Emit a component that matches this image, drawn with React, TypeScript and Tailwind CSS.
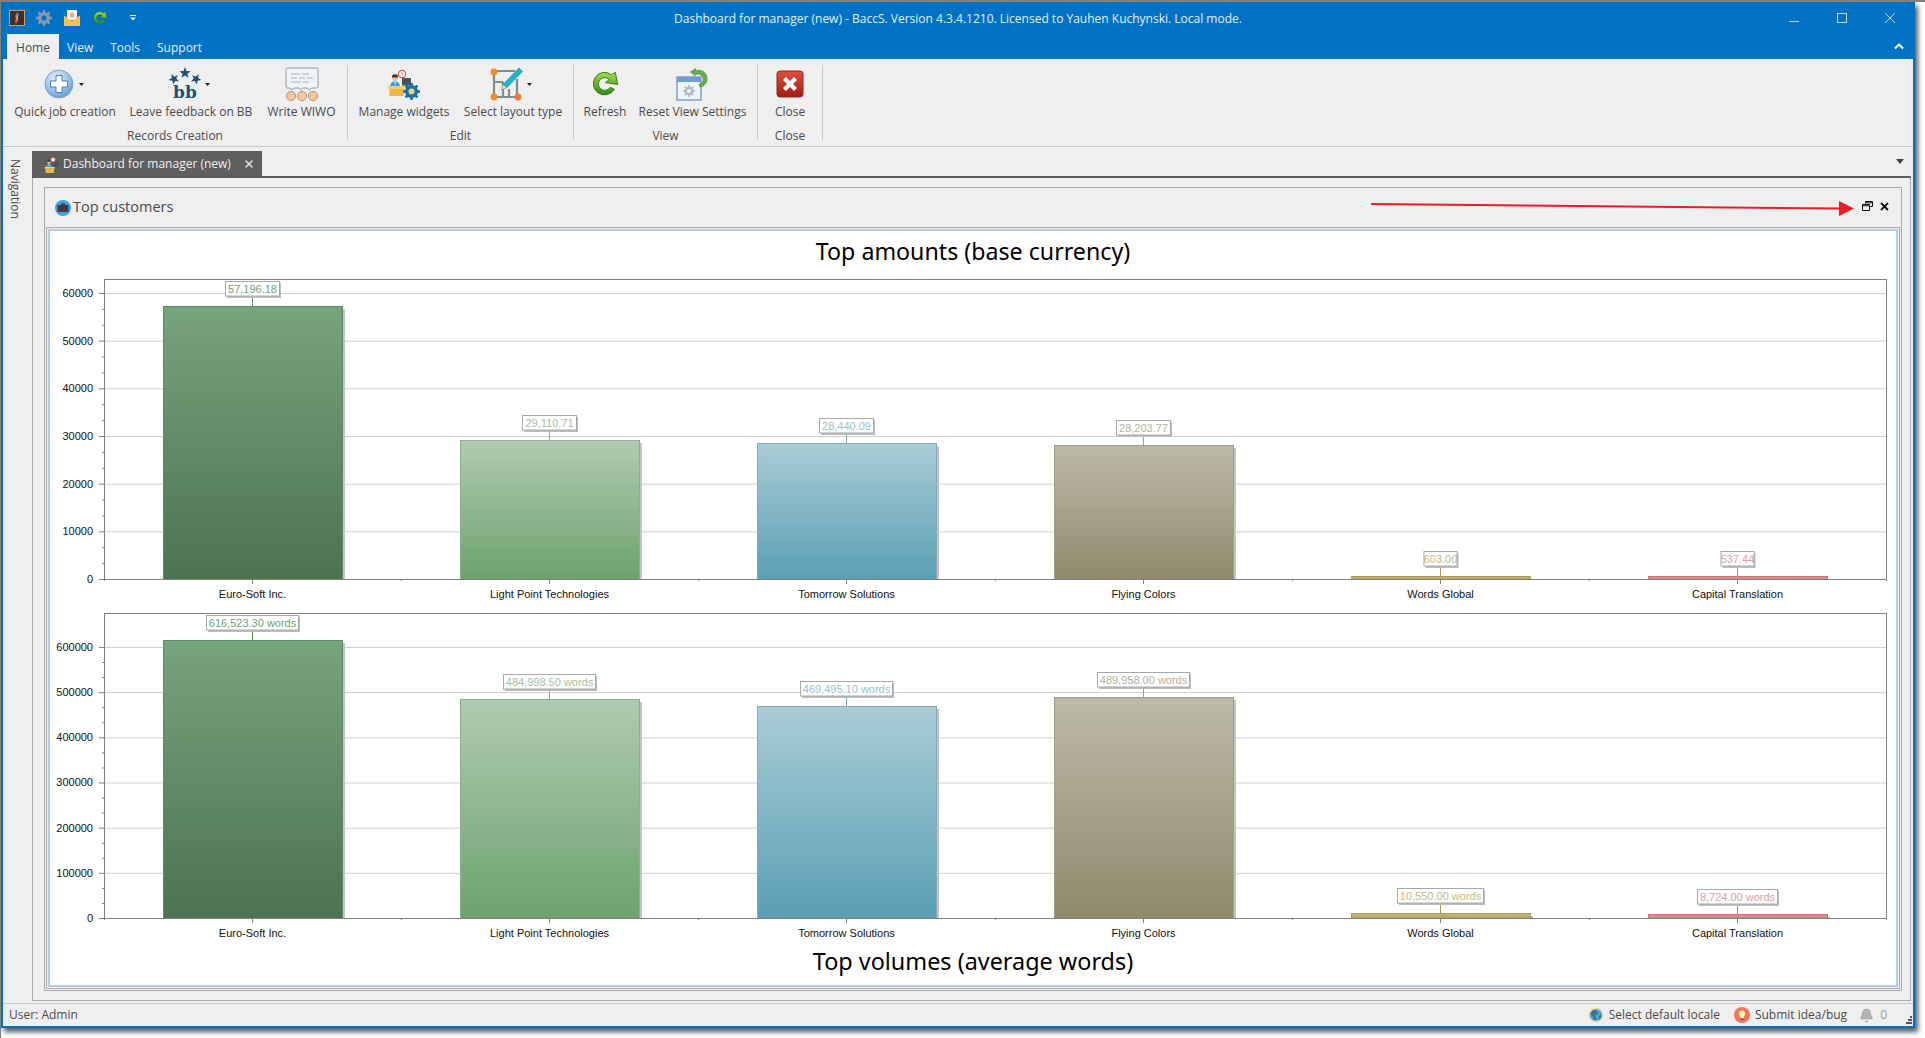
import React from 'react';
import { Bell, X } from 'lucide-react';

type Bar = { name: string; value: number; label: string; boxW: number };

const series = [
  { top: '#76a47c', bottom: '#4d7250', edge: '#5d8a64', text: '#6f9f77' },
  { top: '#b0cbb0', bottom: '#6ca26e', edge: '#8fae90', text: '#a3c09f' },
  { top: '#aaccd6', bottom: '#5a9fb4', edge: '#84a9b4', text: '#9bbfcb' },
  { top: '#bdb9a8', bottom: '#8f8a6c', edge: '#a09c88', text: '#b5b19c' },
  { top: '#c6b878', bottom: '#b3a35f', edge: '#a89a5c', text: '#c5b97f' },
  { top: '#e49a9a', bottom: '#d07a7c', edge: '#c47578', text: '#d9a0a5' },
];

const amounts: Bar[] = [
  { name: 'Euro-Soft Inc.', value: 57196.18, label: '57,196.18', boxW: 54 },
  { name: 'Light Point Technologies', value: 29110.71, label: '29,110.71', boxW: 54 },
  { name: 'Tomorrow Solutions', value: 28440.09, label: '28,440.09', boxW: 54 },
  { name: 'Flying Colors', value: 28203.77, label: '28,203.77', boxW: 54 },
  { name: 'Words Global', value: 603, label: '603.00', boxW: 33 },
  { name: 'Capital Translation', value: 537.44, label: '537.44', boxW: 33 },
];

const volumes: Bar[] = [
  { name: 'Euro-Soft Inc.', value: 616523.3, label: '616,523.30 words', boxW: 92 },
  { name: 'Light Point Technologies', value: 484998.5, label: '484,998.50 words', boxW: 92 },
  { name: 'Tomorrow Solutions', value: 469495.1, label: '469,495.10 words', boxW: 92 },
  { name: 'Flying Colors', value: 489958, label: '489,958.00 words', boxW: 92 },
  { name: 'Words Global', value: 10550, label: '10,550.00 words', boxW: 86 },
  { name: 'Capital Translation', value: 8724, label: '8,724.00 words', boxW: 80 },
];

// polygon points for a cog wheel
const gearPoints = (cx: number, cy: number, outer: number, inner: number, teeth: number) => {
  const pts: string[] = [];
  for (let i = 0; i < teeth; i++) {
    const a = (i / teeth) * Math.PI * 2;
    const w = (Math.PI * 2) / teeth;
    [
      [inner, a - w * 0.5],
      [inner, a - w * 0.28],
      [outer, a - w * 0.18],
      [outer, a + w * 0.18],
      [inner, a + w * 0.28],
    ].forEach(([r, t]) => pts.push(`${(cx + r * Math.cos(t)).toFixed(2)},${(cy + r * Math.sin(t)).toFixed(2)}`));
  }
  return pts.join(' ');
};

const starPoints = (cx: number, cy: number, r: number, rot = 0) => {
  const pts: string[] = [];
  for (let i = 0; i < 10; i++) {
    const rad = i % 2 === 0 ? r : r * 0.42;
    const a = -Math.PI / 2 + rot + (i * Math.PI) / 5;
    pts.push(`${(cx + rad * Math.cos(a)).toFixed(2)},${(cy + rad * Math.sin(a)).toFixed(2)}`);
  }
  return pts.join(' ');
};

const Caret = () => (
  <svg width="5" height="3" viewBox="0 0 5 3" className="shrink-0">
    <polygon points="0,0 5,0 2.5,3" fill="#222" />
  </svg>
);

const RefreshIcon = ({ size = 32, id }: { size?: number; id: string }) => (
  <svg width={size} height={size} viewBox="0 0 32 32">
    <defs>
      <linearGradient id={id} x1="0" y1="0" x2="0" y2="1">
        <stop offset="0" stopColor="#a6dc4e" />
        <stop offset="1" stopColor="#2f8a12" />
      </linearGradient>
    </defs>
    <path
      d="M26 21.5A12 12 0 1 1 23 6.2L27 3.5L29.5 16.5L16.5 14.5L20.5 11.2A6.8 6.8 0 1 0 21.5 19.5Z"
      fill={`url(#${id})`}
      stroke="#2c7a14"
      strokeWidth="1"
      strokeLinejoin="round"
    />
  </svg>
);

const DeskPerson = () => (
  <>
    <circle cx="14" cy="6" r="3.6" fill="#fff" stroke="#e5533d" strokeWidth="1.2" />
    <path d="M14 4v2.2h1.6" stroke="#e5533d" strokeWidth=".8" fill="none" />
    <circle cx="7" cy="10" r="3" fill="#f3c08f" />
    <path d="M3.8 9.5a3.2 3.2 0 0 1 6.4 0z" fill="#3b3b3b" />
    <path d="M2 19c0-3.5 2-5.8 5-5.8s5 2.3 5 5.8z" fill="#35a0dc" />
    <path d="M6.3 13.4h1.4L7.4 18z" fill="#fff" />
    <rect x="0" y="18" width="17" height="3" fill="#f7cf6e" />
    <rect x="1.5" y="21" width="14" height="7" fill="#f0b645" />
    <rect x="14" y="10" width="9" height="7.5" fill="#46525c" />
    <rect x="17" y="17.5" width="3" height="1.5" fill="#46525c" />
  </>
);

const ManageIcon = () => (
  <svg width="32" height="32" viewBox="0 0 32 32">
    <DeskPerson />
    <polygon points={gearPoints(23.5, 23.5, 8.5, 6.4, 8)} fill="#176fa9" />
    <circle cx="23.5" cy="23.5" r="3" fill="#f6cf7a" />
  </svg>
);

const QuickJobIcon = () => (
  <svg width="30" height="30" viewBox="0 0 30 30">
    <defs>
      <radialGradient id="qj" cx="0.4" cy="0.3" r="0.8">
        <stop offset="0" stopColor="#e6f0fa" />
        <stop offset="0.55" stopColor="#9cc3e8" />
        <stop offset="1" stopColor="#4f8fcf" />
      </radialGradient>
    </defs>
    <circle cx="15" cy="15" r="14" fill="url(#qj)" stroke="#7ea8d4" />
    <path d="M12 6.5h6v5.5h5.5v6H18v5.5h-6V18H6.5v-6H12z" fill="#fff" stroke="#3f7fc1" strokeWidth="1" strokeLinejoin="round" />
  </svg>
);

const FeedbackIcon = () => (
  <svg width="34" height="34" viewBox="0 0 34 34">
    <polygon points={starPoints(17, 6, 6)} fill="#1f5279" />
    <polygon points={starPoints(6, 12, 5.6, -0.5)} fill="#1f5279" />
    <polygon points={starPoints(28, 12, 5.6, 0.5)} fill="#1f5279" />
    <text x="17" y="31" textAnchor="middle" fontFamily="'DejaVu Serif', serif" fontWeight="700" fontSize="17" fill="#1f5279">
      bb
    </text>
  </svg>
);

const WiwoIcon = () => (
  <svg width="34" height="34" viewBox="0 0 34 34">
    <path
      d="M2.5 1h29a1.5 1.5 0 0 1 1.5 1.5v17a1.5 1.5 0 0 1-1.5 1.5h-5l-2 2-2-2h-5l-1.500 2-2-2h-5l-2 2-2-2h-3A1.500 1.500 0 0 1 1 19.500v-17A1.500 1.500 0 0 1 2.500 1z"
      fill="#eef3f7"
      stroke="#8d9ba6"
    />
    <path d="M6 7h9M17 7h7M6 11h6M14 11h6M22 11h6M6 15h10M18 15h6" stroke="#a9b3bb" strokeWidth="1.200" />
    <circle cx="6" cy="29" r="4.600" fill="#f6c79e" stroke="#b39378" />
    <circle cx="17" cy="29" r="4.600" fill="#f6c79e" stroke="#b39378" />
    <circle cx="28" cy="29" r="4.600" fill="#f6c79e" stroke="#b39378" />
  </svg>
);

const LayoutIcon = () => (
  <svg width="34" height="34" viewBox="0 0 34 34">
    <path d="M5 4h21M5 4v26M5 30h25M28 12v18M5 15h9M14 15v15M20 22v8" stroke="#7f8c8d" strokeWidth="2.200" fill="none" />
    <circle cx="5" cy="5" r="3.400" fill="#f58a2c" />
    <circle cx="5" cy="30" r="3.400" fill="#f58a2c" />
    <circle cx="29" cy="30" r="3.400" fill="#f5762c" />
    <path d="M30 1l3.500 3.500L17.500 21l-5 1.500 1.500-5z" fill="#1fb6c9" stroke="#0d8797" strokeWidth=".6" />
    <path d="M12.500 22.500l1.500-5 3.500 3.500z" fill="#f3d3a4" />
  </svg>
);

const ResetViewIcon = () => (
  <svg width="34" height="34" viewBox="0 0 34 34">
    <rect x="1" y="10" width="24" height="23" fill="#eef4fb" stroke="#5b8ec4" strokeWidth="1.200" />
    <rect x="1" y="10" width="24" height="5" fill="#6f9fd2" />
    <polygon points={gearPoints(13, 24, 6, 4.400, 8)} fill="#b3bcc6" />
    <circle cx="13" cy="24" r="2" fill="#eef4fb" />
    <path
      d="M19 8.500L14.500 5l5-3.500v2.200A8.500 8.500 0 0 1 31 11a8 8 0 0 1-7 9l-1-2.800a5 5 0 0 0 4.200-6 5.200 5.200 0 0 0-8.200-3z"
      fill="#6cab4a"
      stroke="#3f7f2a"
      strokeWidth=".6"
    />
  </svg>
);

const CloseIcon = () => (
  <svg width="28" height="28" viewBox="0 0 28 28">
    <defs>
      <linearGradient id="cl" x1="0" y1="0" x2="0" y2="1">
        <stop offset="0" stopColor="#e0503f" />
        <stop offset="1" stopColor="#a41a10" />
      </linearGradient>
    </defs>
    <rect x="1" y="1" width="26" height="26" rx="3" fill="url(#cl)" stroke="#8a2a20" />
    <path d="M7 10l3-3 4 4 4-4 3 3-4 4 4 4-3 3-4-4-4 4-3-3 4-4z" fill="#fff" />
  </svg>
);

type RibbonButton = { label: string; width: number; icon: React.ReactNode; caret?: string };

const RibbonGroup = ({ title, width, pad, buttons }: { title: string; width: string; pad: string; buttons: RibbonButton[] }) => (
  <div className={`${width} flex flex-col pt-[8px]`}>
    <div className={`flex gap-[13px] ${pad}`}>
      {buttons.map((b) => (
        <div key={b.label} className="flex flex-col items-center" style={{ width: b.width }}>
          <div className={`h-[34px] flex items-center justify-center ${b.caret ?? ''}`}>
            {b.icon}
            {b.caret && <Caret />}
          </div>
          <div className="mt-[3px] h-[16px] leading-[16px] whitespace-nowrap">{b.label}</div>
        </div>
      ))}
    </div>
    <div className="mt-[8px] h-[16px] leading-[16px] text-center">{title}</div>
  </div>
);

const Separator = () => <div className="w-px h-[75px] mt-[6px] bg-[#c8c8c8] shrink-0" />;

const Chart = ({
  id,
  y0,
  height,
  top,
  bottom,
  step,
  stepPx,
  count,
  data,
  pxPerUnit,
}: {
  id: string;
  y0: number;
  height: number;
  top: number;
  bottom: number;
  step: number;
  stepPx: number;
  count: number;
  data: Bar[];
  pxPerUnit: number;
}) => {
  const left = 104;
  const right = 1886;
  const slot = (right - left) / 6;
  const ticks = Array.from({ length: count + 1 }, (_, i) => i);

  return (
    <svg width="1846" height={height} viewBox={`50 ${y0} 1846 ${height}`} className="block shrink-0">
      <defs>
        {series.map((s, i) => (
          <linearGradient key={i} id={`${id}-${i}`} x1="0" y1="0" x2="0" y2="1">
            <stop offset="0" stopColor={s.top} />
            <stop offset="1" stopColor={s.bottom} />
          </linearGradient>
        ))}
      </defs>

      {ticks.slice(1).map((i) => (
        <line key={i} x1={left} x2={right} y1={bottom - i * stepPx + 0.5} y2={bottom - i * stepPx + 0.5} stroke="#cfcfcf" />
      ))}

      {data.map((d, i) => {
        const cx = Math.round(left + slot * i + slot / 2);
        const h = d.value * pxPerUnit;
        const y = Math.round(bottom - h);
        const s = series[i];
        const boxBottom = y - 10;
        return (
          <g key={d.name}>
            <rect x={cx - 87} y={y + 3} width={179} height={bottom - y - 3} fill="#c4c4c4" />
            <rect x={cx - 89.5} y={y + 0.5} width={179} height={bottom - y} fill={`url(#${id}-${i})`} stroke={s.edge} />
            <line x1={cx - 0.5} x2={cx - 0.5} y1={boxBottom} y2={y} stroke={s.edge} />
            <rect x={cx - d.boxW / 2 + 1} y={boxBottom - 13} width={d.boxW} height={15} fill="#bdbdbd" />
            <rect x={cx - d.boxW / 2 - 0.5} y={boxBottom - 14.5} width={d.boxW} height={14.500} fill="#fff" stroke="#a8a8a8" />
            <text x={cx - 0.5} y={boxBottom - 3.500} textAnchor="middle" fontFamily="'Liberation Sans', sans-serif" fontSize="11" fill={s.text}>
              {d.label}
            </text>
            <line x1={cx - 0.5} x2={cx - 0.5} y1={bottom} y2={bottom + 5} stroke="#808080" />
            <text x={cx - 0.5} y={bottom + 19} textAnchor="middle" fontFamily="'Liberation Sans', sans-serif" fontSize="11" fill="#111">
              {d.name}
            </text>
          </g>
        );
      })}

      <rect x={left + 0.5} y={top + 0.5} width={right - left} height={bottom - top} fill="none" stroke="#808080" />

      {ticks.map((i) => {
        const y = bottom - i * stepPx;
        return (
          <g key={i}>
            <line x1={left - 5} x2={left} y1={y + 0.5} y2={y + 0.5} stroke="#808080" />
            {i < count &&
              [1, 2].map((m) => (
                <line key={m} x1={left - 2} x2={left} y1={y - (m * stepPx) / 3 + 0.5} y2={y - (m * stepPx) / 3 + 0.5} stroke="#808080" />
              ))}
            <text x={93} y={y + 4} textAnchor="end" fontFamily="'Liberation Sans', sans-serif" fontSize="11" fill="#111">
              {i * step}
            </text>
          </g>
        );
      })}

      {[0, 1, 2, 3, 4, 5, 6].map((i) => (
        <line key={i} x1={Math.round(left + slot * i) + 0.5} x2={Math.round(left + slot * i) + 0.5} y1={bottom} y2={bottom + 2} stroke="#808080" />
      ))}
    </svg>
  );
};

export default function App() {
  return (
    <div className="relative w-[1925px] h-[1038px] bg-white border-t-2 border-l border-[#808080] overflow-hidden font-['Open_Sans',sans-serif] text-[12px] text-[#4a4a4a]">
      <div className="w-[1914px] h-[1026px] flex flex-col bg-[#efefef] border-x-2 border-b-2 border-[#0072c6] shadow-[3px_4px_5px_rgba(0,0,0,0.65)]">
        {/* title bar */}
        <div className="h-[31px] bg-[#0072c6] grid grid-cols-[1fr_auto_1fr] items-center shrink-0">
          <div className="flex items-center pl-[6px]">
            <svg width="16" height="16" viewBox="0 0 16 16" className="mr-[11px]">
              <rect x=".5" y=".5" width="15" height="15" fill="#333" stroke="#e8944a" />
              <path d="M8 2l2 3-1.500 2 1 3-2.500 4-1-3 1-3-1-2z" fill="#ef5a3a" />
              <path d="M8 5l.8 2-.8 3-.6-2z" fill="#f7cf5b" />
            </svg>
            <svg width="16" height="16" viewBox="0 0 16 16" className="mr-[12px]">
              <polygon points={gearPoints(8, 8, 8, 5.800, 8)} fill="#8b98a6" />
              <circle cx="8" cy="8" r="2.600" fill="#0072c6" />
            </svg>
            <svg width="16" height="16" viewBox="0 0 16 16" className="mr-[12px]">
              <rect x="3" y="0" width="10" height="10" fill="#fdf3ee" />
              <circle cx="8" cy="5" r="2.500" fill="#f2a3a0" />
              <path d="M0 5.500L8 11l8-5.500V16H0z" fill="#f6c34d" />
            </svg>
            <RefreshIcon size={16} id="tb-refresh" />
            <svg width="6" height="6" viewBox="0 0 6 6" className="ml-[22px]">
              <rect x="0" y="0" width="6" height="1" fill="#fff" />
              <polygon points="0,2.500 6,2.500 3,5.500" fill="#fff" />
            </svg>
          </div>
          <div className="mt-[2px] text-[12px] text-[#e6f0f8] whitespace-nowrap">
            Dashboard for manager (new) - BaccS. Version 4.3.4.1210. Licensed to Yauhen Kuchynski. Local mode.
          </div>
          <div className="flex items-center justify-end gap-[38px] pr-[18px]">
            <div className="w-[10px] h-px bg-[#c4d8ea] mt-[7px]" />
            <div className="w-[10px] h-[10px] border border-[#c4d8ea]" />
            <svg width="10" height="10" viewBox="0 0 10 10">
              <path d="M0 0l10 10M10 0L0 10" stroke="#c4d8ea" />
            </svg>
          </div>
        </div>

        {/* menu tabs */}
        <div className="h-[26px] bg-[#0072c6] flex items-end pl-[4px] pr-[9px] shrink-0 text-[12px] text-[#e6f0f8]">
          <div className="w-[52px] h-[25px] pt-[2px] bg-[#efefef] text-[#4a4a4a] flex items-center justify-center">Home</div>
          <div className="h-[25px] pt-[2px] flex items-center pl-[8px]">View</div>
          <div className="h-[25px] pt-[2px] flex items-center pl-[17px]">Tools</div>
          <div className="h-[25px] pt-[2px] flex items-center pl-[17px]">Support</div>
          <svg width="10" height="7" viewBox="0 0 10 7" className="ml-auto mb-[9px]">
            <path d="M1 5.500L5 1.500l4 4" stroke="#fff" strokeWidth="2" fill="none" />
          </svg>
        </div>

        {/* ribbon */}
        <div className="h-[88px] flex items-start border-b border-[#c8c8c8] shrink-0">
          <RibbonGroup
            title="Records Creation"
            width="w-[344px]"
            pad="pl-[11px]"
            buttons={[
              { label: 'Quick job creation', width: 102, icon: <QuickJobIcon />, caret: 'gap-[5px] pr-[2px]' },
              { label: 'Leave feedback on BB', width: 124, icon: <FeedbackIcon />, caret: 'gap-[3px] pr-[4px]' },
              { label: 'Write WIWO', width: 71, icon: <WiwoIcon /> },
            ]}
          />
          <Separator />
          <RibbonGroup
            title="Edit"
            width="w-[225px]"
            pad="pl-[10px]"
            buttons={[
              { label: 'Manage widgets', width: 92, icon: <ManageIcon /> },
              { label: 'Select layout type', width: 100, icon: <LayoutIcon />, caret: 'gap-[4px] pr-[6px]' },
            ]}
          />
          <Separator />
          <RibbonGroup
            title="View"
            width="w-[183px]"
            pad="pl-[11px]"
            buttons={[
              { label: 'Refresh', width: 40, icon: <RefreshIcon size={30} id="rb-refresh" /> },
              { label: 'Reset View Settings', width: 109, icon: <ResetViewIcon /> },
            ]}
          />
          <Separator />
          <RibbonGroup title="Close" width="w-[64px]" pad="pl-[17px]" buttons={[{ label: 'Close', width: 30, icon: <CloseIcon /> }]} />
          <Separator />
        </div>

        {/* navigation + document */}
        <div className="flex-1 min-h-0 flex pr-[2px] pb-[2px]">
          <div className="w-[29px] shrink-0 flex justify-center pt-[12px] pr-[6px]">
            <div className="[writing-mode:vertical-rl] leading-none">Navigation</div>
          </div>
          <div className="flex-1 min-w-0 flex flex-col">
            <div className="relative h-[31px] shrink-0 flex items-end border-b-2 border-[#5f5f5f]">
              <div className="w-[230px] h-[25px] pt-[1px] bg-[#5f5f5f] text-[#f0f0f0] flex items-center pl-[12px]">
                <svg width="17" height="17" viewBox="0 0 26 28" className="mr-[2px]">
                  <DeskPerson />
                </svg>
                <span className="whitespace-nowrap">Dashboard for manager (new)</span>
                <X size={12} strokeWidth={3} className="ml-[12px] text-[#e8e8e8]" />
              </div>
              <svg width="10" height="6" viewBox="0 0 10 6" className="absolute right-[6px] top-[12px]">
                <polygon points="1,0 9,0 5,5" fill="#444" />
              </svg>
            </div>
            <div className="flex-1 min-h-0 border-l border-r border-b border-[#aaaaaa] pl-[11px] pr-[8px] pt-[9px] pb-[9px] flex flex-col">
              <div className="flex-1 min-h-0 border border-[#aaaaaa] flex flex-col px-px pb-px">
                <div className="h-[39px] shrink-0 flex items-center pl-[9px] pr-[11px] text-[#4a4a4a]">
                  <svg width="16" height="16" viewBox="0 0 16 16" className="mr-[2px]">
                    <circle cx="8" cy="8" r="8" fill="#38a3e6" />
                    <rect x="2.500" y="5" width="11" height="7" fill="#4a3440" />
                    <rect x="6" y="3.500" width="4" height="2" fill="#4a3440" />
                  </svg>
                  <span className="text-[14.5px] leading-none">Top customers</span>
                  <svg width="11" height="11" viewBox="0 0 11 11" className="ml-auto mt-[-3px]">
                    <path d="M3.500 2.500V.5h7v5H8M.5 3.500h7v6h-7zM.5 4.800h7M3.500 1.800h7" stroke="#111" fill="none" />
                  </svg>
                  <svg width="9" height="9" viewBox="0 0 9 9" className="ml-[7px] mt-[-3px]">
                    <path d="M1 1l7 7M8 1L1 8" stroke="#111" strokeWidth="1.800" />
                  </svg>
                </div>
                <div className="flex-1 min-h-0 border border-[#aaaaaa] bg-[#efefef] p-px flex">
                  <div className="flex-1 min-w-0 border-2 border-[#b8cce4] bg-white flex flex-col">
                    <div className="h-[42px] pb-[2px] shrink-0 flex items-center justify-center font-['Noto_Sans',sans-serif] text-[23.2px] text-black">
                      Top amounts (base currency)
                    </div>
                    <Chart id="amt" y0={273} height={334} top={279} bottom={579} step={10000} stepPx={47.67} count={6} data={amounts} pxPerUnit={0.004767} />
                    <Chart id="vol" y0={607} height={338} top={613} bottom={918} step={100000} stepPx={45.17} count={6} data={volumes} pxPerUnit={0.0004517} />
                    <div className="h-[40px] pb-[7px] shrink-0 flex items-center justify-center font-['Noto_Sans',sans-serif] text-[23.4px] text-black">
                      Top volumes (average words)
                    </div>
                  </div>
                </div>
              </div>
            </div>
          </div>
        </div>

        {/* status bar */}
        <div className="h-[23px] shrink-0 flex items-center border-t border-[#c8c8c8] pl-[6px] pr-px">
          <span>User: Admin</span>
          <svg width="16" height="16" viewBox="0 0 16 16" className="ml-auto mr-[5px]">
            <circle cx="8" cy="8" r="7.500" fill="#f1d9a8" />
            <circle cx="8" cy="8" r="6" fill="#45a5dc" />
            <path d="M5 3l4 1 1 3-3 1 1 4-2 1-1-4-3-2zM11 9l2-1 0 3-2 1z" fill="#3f6f80" />
          </svg>
          <span>Select default locale</span>
          <svg width="16" height="16" viewBox="0 0 16 16" className="ml-[14px] mr-[5px]">
            <circle cx="8" cy="8" r="8" fill="#f1765a" />
            <path d="M8 3.500a3.200 3.200 0 0 0-1.700 5.900V11h3.400V9.400A3.200 3.200 0 0 0 8 3.500z" fill="#fff3c4" />
            <rect x="6.500" y="11.500" width="3" height="1.500" fill="#5a5a5a" />
          </svg>
          <span>Submit idea/bug</span>
          <Bell size={15} fill="#b4b4b4" stroke="#a8a8a8" className="ml-[12px] mr-[6px]" />
          <span className="text-[#9a9a9a]">0</span>
          <svg width="6" height="8" viewBox="0 0 6 8" className="ml-[19px] mt-[10px]">
            <path d="M4 0h2v2H4zM2 3h2v2H2zM4 3h2v2H4zM0 6h2v2H0zM2 6h2v2H2zM4 6h2v2H4z" fill="#555" />
          </svg>
        </div>
      </div>

      {/* annotation arrow drawn over the widget header */}
      <svg width="490" height="20" viewBox="1371 200 490 20" className="absolute left-[1370px] top-[198px] pointer-events-none">
        <line x1="1371" y1="204" x2="1842" y2="208.500" stroke="#ed1c24" strokeWidth="2" />
        <polygon points="1839,201 1854,208.500 1839,216" fill="#ed1c24" />
      </svg>
    </div>
  );
}
